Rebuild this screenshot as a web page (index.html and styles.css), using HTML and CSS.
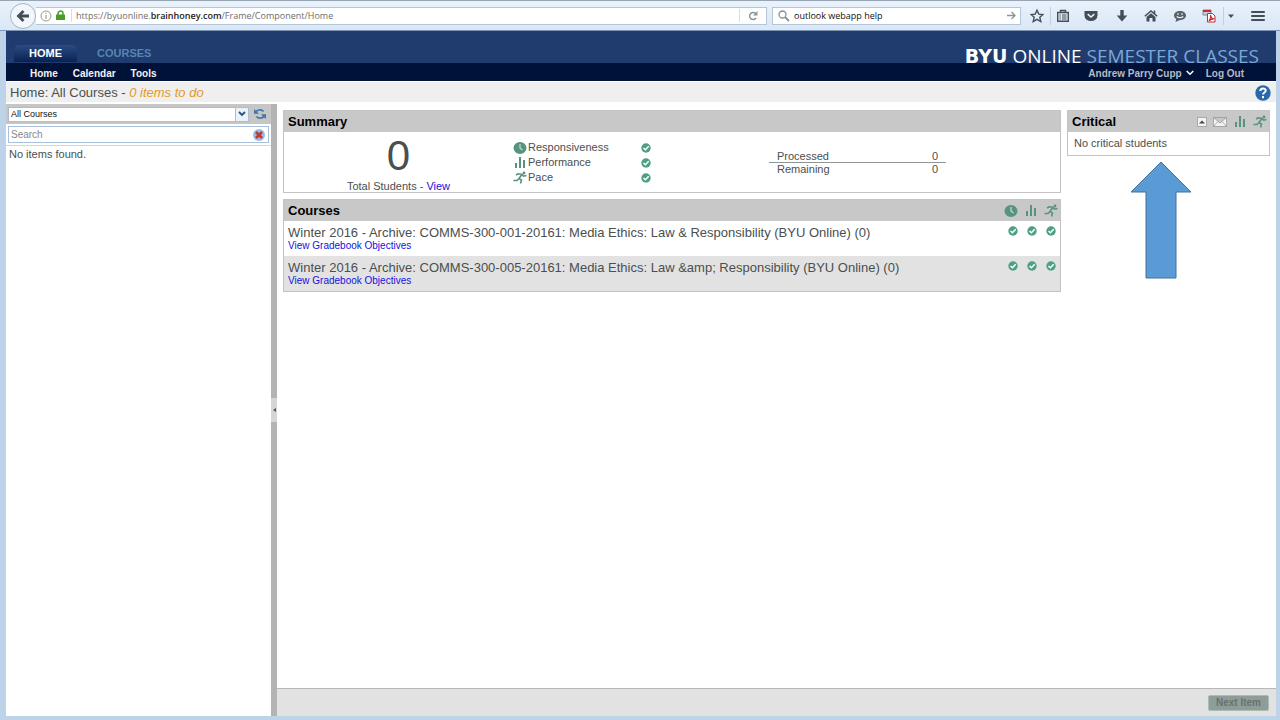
FILE: index.html
```html
<!DOCTYPE html>
<html lang="en">
<head>
<meta charset="utf-8">
<title>Home: All Courses</title>
<link rel="stylesheet" href="styles.css">
</head>
<body>
<svg class="sprite" aria-hidden="true">
  <symbol id="clock" viewBox="0 0 14 14"><ellipse cx="7" cy="7" rx="6.500" ry="6" fill="currentColor"/><path d="M7 3v4l2.500 2" fill="none" stroke="#c9dcd6" stroke-width="1.200"/></symbol>
  <symbol id="bars" viewBox="0 0 14 14"><path d="M2 7h2v5H2zM6 1h2v11H6zM10 4h2v8h-2z" fill="currentColor"/></symbol>
  <symbol id="runner" viewBox="0 0 14 14"><circle cx="11" cy="2" r="1.400" fill="currentColor"/><path d="M3 4.200L5 2.800 9 3.300 6 7.500 8.500 9 7.500 12.500M6 7.500L4 9.500H.5M9 3.300L10.500 5.200 13.500 4.500" fill="none" stroke="currentColor" stroke-width="1.600"/></symbol>
  <symbol id="check" viewBox="0 0 10 10"><circle cx="5" cy="5" r="4.700" fill="#4da182"/><path d="M2.500 5l1.900 1.800L7.700 3.300" fill="none" stroke="#fff" stroke-width="1.500"/></symbol>
</svg>

<header class="browser-bar">
  <button class="back" aria-label="Back"><svg width="14" height="14" viewBox="0 0 14 14"><path d="M13 7H3M7.500 2L2.500 7l5 5" fill="none" stroke="#454d55" stroke-width="2.800"/></svg></button>
  <div class="address">
    <svg width="12" height="12" viewBox="0 0 12 12"><circle cx="6" cy="6" r="5" fill="none" stroke="#999"/><path d="M6 5v4M6 2.700v1.200" stroke="#888"/></svg>
    <svg width="9" height="11" viewBox="0 0 9 11"><path d="M2 5V3.500a2.500 2.500 0 0 1 5 0V5" fill="none" stroke="#4a9a2c" stroke-width="1.500"/><path d="M0 4.500h9V10H0z" fill="#4a9a2c"/></svg>
    <div class="url" role="textbox" contenteditable="true" spellcheck="false" aria-label="Address">https://byuonline.<b>brainhoney.com</b>/Frame/Component/Home</div>
    <button class="reload" aria-label="Reload"><svg width="10" height="10" viewBox="0 0 10 10"><path d="M8 7a3.500 3.500 0 1 1 0-4" fill="none" stroke="#8b949b" stroke-width="1.400"/><path d="M9.500 0v4.500H5z" fill="#8b949b"/></svg></button>
  </div>
  <form class="web-search">
    <svg width="12" height="12" viewBox="0 0 12 12"><circle cx="4.500" cy="4.500" r="3.500" fill="none" stroke="#8a8f94" stroke-width="1.300"/><path d="M7 7l4 4" stroke="#8a8f94" stroke-width="1.800"/></svg>
    <input type="text" value="outlook webapp help" aria-label="Web search">
    <button type="button" aria-label="Go"><svg width="9" height="9" viewBox="0 0 9 9"><path d="M0 4.500h7.500M4.500 1l3.500 3.500L4.500 8" fill="none" stroke="#8b949b" stroke-width="1.300"/></svg></button>
  </form>
  <div class="tools">
    <button aria-label="Bookmark"><svg width="14" height="14" viewBox="0 0 14 14"><path d="M7 1.200l1.800 3.900 4.200.4-3.200 2.800 1 4.200L7 10.300l-3.800 2.200 1-4.200L1 5.500l4.200-.4z" fill="none" stroke="#454d55" stroke-width="1.400"/></svg></button>
    <button aria-label="Bookmarks list" class="ruled"><svg width="14" height="14" viewBox="0 0 14 14"><path d="M1.700 3.500h10.600v8.800H1.700zM4.500 3V1.500h5V3" fill="none" stroke="#454d55" stroke-width="1.400"/><path d="M3.500 6h1.300M6 6h4.500M3.500 8h1.300M6 8h4.500M3.500 10h1.300M6 10h4.500" stroke="#454d55"/></svg></button>
    <button aria-label="Pocket"><svg width="14" height="14" viewBox="0 0 14 14"><path d="M.5 2h13v4.500a6.500 5.500 0 0 1-13 0z" fill="#454d55"/><path d="M3.700 5.200L7 8l3.300-2.800" fill="none" stroke="#eaf2fb" stroke-width="1.600"/></svg></button>
    <button aria-label="Downloads"><svg width="14" height="14" viewBox="0 0 14 14"><path d="M5.300 1h3.400v5.500h3.600L7 12.500 1.700 6.500h3.600z" fill="#454d55"/></svg></button>
    <button aria-label="Home page"><svg width="14" height="14" viewBox="0 0 14 14"><path d="M.8 7.300L7 2l6.200 5.300M10.500 1.500v3" fill="none" stroke="#454d55" stroke-width="1.500"/><path d="M2.500 8L7 4.200 11.500 8v4.500h-3V9h-3v3.500h-3z" fill="#454d55"/></svg></button>
    <button aria-label="Chat"><svg width="14" height="14" viewBox="0 0 14 14"><path d="M7 2c3.500 0 6 2 6 4.500S10.500 11 7 11l-4.500 2 .7-3C1.800 9.200 1 8 1 6.500 1 4 3.500 2 7 2z" fill="#5b6268"/><path d="M4 5h2M8 5h2M3.700 7.500q3.300 2.500 6.600 0" fill="none" stroke="#eaf2fb" stroke-width="1.200"/></svg></button>
    <button aria-label="Convert to PDF"><svg width="14" height="14" viewBox="0 0 14 14"><path d="M1 1h8v5H1z" fill="#c5cfe0" stroke="#7d8797"/><path d="M1 2h8" stroke="#d02a28" stroke-width="2"/><path d="M5.500 4.500h5l2.500 2.500v6H5.500z" fill="#fff" stroke="#b33"/><path d="M7 12c1.500-2 2-4 1.500-6 .5 3 2 4 4 4-2-.5-4 .5-5.500 2z" fill="none" stroke="#d02a28" stroke-width="1.200"/></svg></button>
    <button aria-label="More" class="ruled narrow"><svg width="6" height="4" viewBox="0 0 6 4"><path d="M0 .5h6L3 4z" fill="#454d55"/></svg></button>
    <button aria-label="Menu" class="menu"><svg width="14" height="12" viewBox="0 0 14 12"><path d="M1 2h12M1 6h12M1 10h12" stroke="#454d55" stroke-width="2" stroke-linecap="round"/></svg></button>
  </div>
</header>

<div class="app">
  <nav class="primary">
    <div class="tabs"><a class="active" href="#">HOME</a><a href="#">COURSES</a></div>
    <div class="brand"><b>BYU</b> ONLINE <span>SEMESTER CLASSES</span></div>
  </nav>
  <nav class="secondary">
    <a href="#">Home</a><a href="#">Calendar</a><a href="#">Tools</a>
    <div class="account"><button>Andrew Parry Cupp <svg width="8" height="6" viewBox="0 0 8 6"><path d="M.7 1l3.300 3.200L7.300 1" fill="none" stroke="#fff" stroke-width="1.500"/></svg></button><a href="#">Log Out</a></div>
  </nav>
  <div class="title-bar">
    <h1>Home: All Courses - <em>0 items to do</em></h1>
    <button aria-label="Help"><svg width="16" height="16" viewBox="0 0 16 16"><circle cx="8" cy="8" r="7.700" fill="#2868ad"/><path d="M5.300 6c0-3.600 5.500-3.300 5.400-.3C10.600 7.500 8 7.500 8 9.600M8 11v2.200" fill="none" stroke="#fff" stroke-width="2"/></svg></button>
  </div>

  <div class="workspace">
    <aside class="sidebar">
      <div class="filter">
        <div class="select-box">
          <select aria-label="Course filter"><option>All Courses</option></select>
          <span class="arrow"><svg width="8" height="6" viewBox="0 0 8 6"><path d="M1 1l3 3 3-3" fill="none" stroke="#23527c" stroke-width="1.800"/></svg></span>
        </div>
        <button aria-label="Refresh"><svg width="12" height="12" viewBox="0 0 12 12"><path d="M1.500 5A4.500 4 0 0 1 9.500 3.500M10.500 7A4.500 4 0 0 1 2.500 8.500" fill="none" stroke="#3a78af" stroke-width="1.700"/><path d="M0 1v4.700h5zM12 11V6.300H7z" fill="#3a78af"/></svg></button>
      </div>
      <div class="find">
        <div class="find-box">
          <input type="text" placeholder="Search" aria-label="Search">
          <button aria-label="Clear search"><svg width="12" height="12" viewBox="0 0 12 12"><circle cx="6" cy="6" r="6" fill="#98bce8"/><path d="M3 3l6 6M9 3L3 9" stroke="#c33b2c" stroke-width="2.600"/></svg></button>
        </div>
      </div>
      <p>No items found.</p>
    </aside>
    <div class="splitter"><button aria-label="Collapse sidebar"><svg width="3" height="4" viewBox="0 0 3 4"><path d="M3 0v4L0 2z" fill="#555"/></svg></button></div>

    <div class="content">
      <main class="dashboard">
        <div class="column">
          <section class="panel">
            <h2>Summary</h2>
            <div class="summary">
              <div class="total"><strong>0</strong><span>Total Students - <a href="#">View</a></span></div>
              <ul class="metrics">
                <li><svg class="icon"><use href="#clock"/></svg><span>Responsiveness</span><svg class="tick"><use href="#check"/></svg></li>
                <li><svg class="icon"><use href="#bars"/></svg><span>Performance</span><svg class="tick"><use href="#check"/></svg></li>
                <li><svg class="icon"><use href="#runner"/></svg><span>Pace</span><svg class="tick"><use href="#check"/></svg></li>
              </ul>
              <table class="progress">
                <tr><th scope="row">Processed</th><td>0</td></tr>
                <tr><th scope="row">Remaining</th><td>0</td></tr>
              </table>
            </div>
          </section>
          <section class="panel">
            <h2>Courses<span class="head-icons"><svg class="icon"><use href="#clock"/></svg><svg class="icon"><use href="#bars"/></svg><svg class="icon"><use href="#runner"/></svg></span></h2>
            <article class="course">
              <div><h3>Winter 2016 - Archive: COMMS-300-001-20161: Media Ethics: Law &amp; Responsibility (BYU Online) (0)</h3><a href="#">View Gradebook Objectives</a></div>
              <span class="ticks"><svg class="tick"><use href="#check"/></svg><svg class="tick"><use href="#check"/></svg><svg class="tick"><use href="#check"/></svg></span>
            </article>
            <article class="course">
              <div><h3>Winter 2016 - Archive: COMMS-300-005-20161: Media Ethics: Law &amp;amp; Responsibility (BYU Online) (0)</h3><a href="#">View Gradebook Objectives</a></div>
              <span class="ticks"><svg class="tick"><use href="#check"/></svg><svg class="tick"><use href="#check"/></svg><svg class="tick"><use href="#check"/></svg></span>
            </article>
          </section>
        </div>
        <div class="rail">
          <section class="panel">
            <h2>Critical<span class="head-icons">
              <button class="toggle" aria-label="Collapse"><svg width="6" height="4" viewBox="0 0 6 4"><path d="M0 3.500h6L3 .5z" fill="#444"/></svg></button>
              <svg width="14" height="10" viewBox="0 0 14 10"><path d="M.5.5h13v9H.5zM.5.500L7 6 13.500.5M.5 9.500L5 4.500M13.500 9.500L9 4.500" fill="#f3f3f3" stroke="#999" stroke-width=".8"/></svg>
              <svg class="icon"><use href="#bars"/></svg><svg class="icon"><use href="#runner"/></svg></span></h2>
            <p>No critical students</p>
          </section>
          <svg class="pointer" width="62" height="118" viewBox="0 0 62 118"><path d="M31 1L61 31H46v86H16V31H1z" fill="#5b9bd5" stroke="#41719c"/></svg>
        </div>
      </main>
      <footer><button disabled>Next Item</button></footer>
    </div>
  </div>
</div>
</body>
</html>
```
FILE: styles.css
```css
* { box-sizing: border-box; }
body {
  margin: 0;
  min-height: 100vh;
  display: flex;
  flex-direction: column;
  background: #bdd3ea;
  font-family: "Liberation Sans", Arial, sans-serif;
  font-size: 11px;
  line-height: 13px;
  color: #4a4f4f;
}
h1, h2, h3, p, ul { margin: 0; padding: 0; font-weight: normal; }
button { margin: 0; padding: 0; border: 0; background: none; font: inherit; color: inherit; display: flex; align-items: center; justify-content: center; }
input, select { font: inherit; min-width: 0; }
a { color: #1212e0; text-decoration: none; }
svg { display: block; flex: none; }
.sprite { position: absolute; width: 0; height: 0; }
.icon { width: 14px; height: 14px; color: #57937f; }
.tick { width: 10px; height: 10px; }

.browser-bar {
  display: flex;
  align-items: center;
  height: 31px;
  padding: 0 6px 0 10px;
  border-top: 1px solid #98a5b3;
  border-bottom: 1px solid #7d93b5;
  background: linear-gradient(#e9f2fc, #d9e7f6);
  font-family: "Open Sans", "Noto Sans", sans-serif;
  font-size: 9px;
}
.back { width: 26px; height: 26px; border: 1px solid #a7b4c2; border-radius: 50%; background: #f1f7fd; }
.address, .web-search { display: flex; align-items: center; height: 18px; border: 1px solid #b4c5d8; background: #fff; }
.address { flex: 1; gap: 4px; padding-left: 4px; border-left: 0; }
.url { flex: 1; margin-left: 2px; padding-left: 4px; border-left: 1px solid #ddd; color: #6d6d6d; outline: 0; white-space: nowrap; }
.url b { color: #222; font-weight: 600; }
.reload { width: 27px; height: 13px; border-left: 1px solid #ddd; }
.web-search { width: 249px; margin-left: 5px; padding: 0 4px 0 5px; gap: 4px; }
.web-search input { flex: 1; padding: 0; border: 0; outline: 0; color: #111; }
.tools { display: flex; align-items: center; margin-left: 3px; }
.tools button { width: 29px; height: 18px; }
.tools .ruled { border-left: 1px solid #c3cfdc; width: 24px; }
.tools .ruled + button { width: 33px; }
.tools button:first-child { width: 26px; }
.tools .narrow { width: 14px; }
.tools .menu { width: 42px; margin-left: 4px; }

.app { flex: 1; display: flex; flex-direction: column; margin: 0 4px 4px 6px; background: #fff; }
.primary { display: flex; justify-content: space-between; align-items: flex-end; height: 32px; padding-left: 8px; background: #203b6d; }
.tabs { display: flex; align-items: flex-end; font-weight: bold; }
.tabs a { padding: 2px 15px; margin-bottom: 1px; color: #5684b5; }
.tabs .active { margin-right: 5px; color: #fff; border-radius: 5px 5px 0 0; background: linear-gradient(#2b4b86, #0a2250); }
.brand { padding-right: 17px; font: 19px/14px "Open Sans", sans-serif; color: #fff; }
.brand b { font-family: "DejaVu Sans", sans-serif; font-weight: bold; }
.brand span { color: #79a8d8; }
.secondary { display: flex; align-items: center; gap: 15px; height: 18px; padding: 2px 32px 0 24px; background: #001238; font-size: 10px; font-weight: bold; }
.secondary a { color: #f4f4f4; }
.account { display: flex; gap: 12px; margin-left: auto; color: #b5bac5; }
.account button { gap: 4px; }
.account a { color: #b5bac5; }
.title-bar { display: flex; justify-content: space-between; align-items: center; height: 20px; margin: 1px 0 2px; padding: 2px 5px 0 4px; background: #efefef; }
.title-bar h1 { font-size: 13px; line-height: 16px; }
.title-bar em { color: #e39a29; }

.workspace { flex: 1; display: flex; }
.sidebar { width: 265px; }
.filter { display: flex; align-items: center; height: 20px; padding: 0 5px 0 2px; gap: 5px; background: #c6c6c6; }
.select-box { position: relative; flex: 1; height: 15px; display: flex; }
.select-box select { flex: 1; appearance: none; padding: 0 18px 0 2px; border: 1px solid #b0bccb; border-radius: 0; background: #fff; color: #111; font-size: 9px; }
.arrow { position: absolute; top: 1px; right: 1px; bottom: 1px; width: 13px; display: flex; align-items: center; justify-content: center; border-left: 1px solid #b0bccb; background: #eaf2fb; pointer-events: none; }
.find { padding: 2px; border-bottom: 1px solid #d0d7df; }
.find-box { display: flex; align-items: center; height: 17px; padding: 0 3px 0 2px; border: 1px solid #a9c0dc; }
.find-box input { flex: 1; padding: 0; border: 0; outline: 0; background: none; font-size: 10px; }
.find-box input::placeholder { color: #888; opacity: 1; }
.sidebar p { padding: 2px 3px; }
.splitter { display: flex; align-items: center; width: 6px; background: #b3b3b3; }
.splitter button { width: 6px; height: 24px; background: #d6d6d6; }

.content { flex: 1; min-width: 0; display: flex; flex-direction: column; }
.dashboard { flex: 1; display: flex; align-items: flex-start; gap: 6px; padding: 6px; }
.column { flex: 1; display: flex; flex-direction: column; gap: 6px; }
.rail { width: 203px; }
.panel { border: 1px solid #c3c3c3; }
.panel h2 { display: flex; justify-content: space-between; align-items: center; height: 21px; padding: 0 2px 0 4px; background: #c8c8c8; color: #000; font-size: 13px; font-weight: bold; }
.head-icons { display: flex; align-items: center; gap: 6px; }
.toggle { width: 10px; height: 10px; background: #f3f3f3; border: 1px solid #aaa; }
.rail .panel p { padding: 5px 6px; }
.summary { display: flex; height: 60px; }
.total { width: 229px; display: flex; flex-direction: column; justify-content: flex-end; align-items: center; }
.total strong { font-size: 42px; line-height: 48px; font-weight: normal; }
.total span { line-height: 12px; }
.metrics { width: 138px; padding: 8px 0 0; list-style: none; }
.metrics li { display: flex; align-items: center; height: 15px; gap: 1px; }
.metrics .tick { margin-left: auto; }
.progress { width: 177px; margin: 18px 0 auto 118px; border-collapse: collapse; line-height: 12px; }
.progress th, .progress td { padding: 0 8px; font-weight: normal; text-align: left; }
.progress td { text-align: right; }
.progress tr:first-child > * { border-bottom: 1px solid #8f9494; }
.course { display: flex; justify-content: space-between; height: 35px; padding: 4px 4px 0; }
.course:nth-of-type(even) { background: #e2e2e2; }
.course h3 { font-size: 13px; line-height: 15px; }
.course a { display: block; font-size: 10px; line-height: 12px; }
.ticks { display: flex; gap: 9px; padding-top: 1px; }
.pointer { margin: 5px 0 0 63px; }
footer { display: flex; justify-content: flex-end; align-items: center; height: 28px; padding-right: 7px; border-top: 1px solid #b8b8b8; background: #e2e2e2; }
footer button { width: 61px; height: 16px; border: 1px solid #a9bdb5; border-radius: 2px; background: #8f9d99; color: #68716e; font-size: 10px; font-weight: bold; }
```
